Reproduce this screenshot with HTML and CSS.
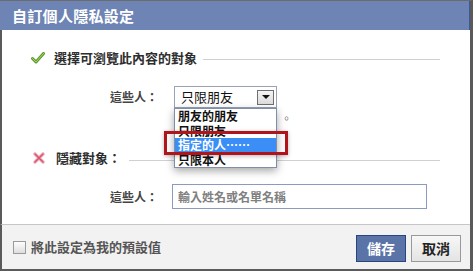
FILE: index.html
```html
<!DOCTYPE html>
<html lang="zh-Hant">
<head>
<meta charset="utf-8">
<link rel="stylesheet" href="styles.css">
</head>
<body>
<div class="dialog">
  <div class="title">自訂個人隱私設定</div>
  <div class="body">
    <div class="section-head">
      <svg class="icon" width="14" height="12" viewBox="0 0 14 12">
        <path d="M1.5 6.5 L5 10 L12.5 1.5" fill="none" stroke="#5f9a2c" stroke-width="3" stroke-linecap="round" stroke-linejoin="round"/>
        <path d="M1.5 6.5 L5 10 L12.5 1.5" fill="none" stroke="#a6d66a" stroke-width="1" stroke-linecap="round" stroke-linejoin="round"/>
      </svg>
      <span class="head-text">選擇可瀏覽此內容的對象</span>
      <span class="rule"></span>
    </div>
    <div class="field-row first">
      <span class="label">這些人：</span>
      <div class="select-wrap">
        <div class="select">
          <span class="select-value">只限朋友</span>
          <span class="select-btn"><span class="tri"></span></span>
        </div>
        <ul class="options">
          <li>朋友的朋友</li>
          <li>只限朋友</li>
          <li class="active">指定的人……</li>
          <li>只限本人</li>
        </ul>
        <div class="mark"></div>
      </div>
      <span class="hint">。</span>
    </div>
    <div class="section-head second">
      <svg class="icon x" width="12" height="12" viewBox="0 0 12 12">
        <path d="M2 2 L10 10 M10 2 L2 10" fill="none" stroke="#f2b9c3" stroke-width="3.6" stroke-linecap="round"/>
        <path d="M2 2 L10 10 M10 2 L2 10" fill="none" stroke="#d4566c" stroke-width="1.6" stroke-linecap="round"/>
      </svg>
      <span class="head-text">隱藏對象：</span>
      <span class="rule"></span>
    </div>
    <div class="field-row last">
      <span class="label">這些人：</span>
      <input class="text-input" type="text" placeholder="輸入姓名或名單名稱">
    </div>
  </div>
  <div class="footer">
    <label class="default">
      <span class="checkbox"></span>
      <span class="default-text">將此設定為我的預設值</span>
    </label>
    <div class="buttons">
      <button class="btn primary">儲存</button>
      <button class="btn">取消</button>
    </div>
  </div>
</div>
</body>
</html>
```

FILE: styles.css
```css
* { box-sizing: border-box; }
html, body { margin: 0; padding: 0; background: #fff; }
body {
  font-family: "Noto Sans CJK TC", "Liberation Sans", sans-serif;
  width: 473px;
  height: 271px;
  overflow: hidden;
}
.dialog {
  width: 473px;
  height: 271px;
  border-top: 1px solid #6b6b6b;
  border-right: 3px solid #5a5a5a;
  border-bottom: 2px solid #5a5a5a;
  display: flex;
  flex-direction: column;
}
.title {
  height: 29px;
  background: #6d84b4;
  border-right: 1px solid #3b5998;
  color: #fff;
  font-size: 15px;
  font-weight: bold;
  line-height: 29px;
  padding-left: 12px;
  letter-spacing: 0.3px;
}
.body {
  flex: 1;
  background: #fff;
  border-left: 2px solid #5a5a5a;
  padding: 20px 30px 0 29px;
}
.section-head {
  display: flex;
  align-items: center;
  height: 16px;
}
.section-head.second { margin-top: 42px; }
.icon { flex: none; }
.icon.x { margin-left: 2px; margin-right: 2px; }
.head-text {
  margin-left: 9px;
  font-size: 13px;
  font-weight: bold;
  color: #2e2e2e;
  line-height: 16px;
  white-space: nowrap;
}
.rule {
  flex: 1;
  height: 1px;
  background: #d0d0d0;
  margin-left: 6px;
  margin-top: 3px;
}
.section-head.second .rule { margin-left: 8px; margin-top: 4px; }
.field-row {
  display: flex;
  align-items: center;
  padding-left: 79px;
}
.field-row.first { margin-top: 20px; height: 22px; }
.field-row.last { margin-top: 18px; height: 25px; }
.label {
  width: 62px;
  font-size: 12px;
  font-weight: bold;
  color: #444;
  line-height: 16px;
}
.select-wrap {
  position: relative;
  margin-left: 2px;
  width: 103px;
  height: 22px;
}
.select {
  height: 22px;
  border: 1px solid #98a2b5;
  background: #fff;
  display: flex;
  align-items: center;
  padding-left: 6px;
}
.select-value {
  flex: 1;
  font-size: 13px;
  color: #111;
  line-height: 16px;
}
.select-btn {
  width: 17px;
  height: 15px;
  margin-right: 2px;
  border: 1px solid #6f6f6f;
  background: linear-gradient(#f4f4f4, #dcdcdc);
  display: flex;
  align-items: center;
  justify-content: center;
}
.tri {
  width: 0;
  height: 0;
  border-left: 4px solid transparent;
  border-right: 4px solid transparent;
  border-top: 4px solid #111;
}
.options {
  position: absolute;
  left: 0;
  top: 22px;
  width: 103px;
  margin: 0;
  padding: 0;
  list-style: none;
  background: #fff;
  border: 1px solid #7f8fa9;
  box-shadow: 0 3px 8px rgba(0,0,0,0.35);
  z-index: 2;
}
.options li {
  height: 14.5px;
  line-height: 14.5px;
  font-size: 12px;
  font-weight: bold;
  color: #111;
  padding-left: 3px;
  white-space: nowrap;
}
.options li.active {
  background: #3a8ef6;
  color: #fff;
}
.mark {
  position: absolute;
  left: -10px;
  top: 45px;
  width: 124px;
  height: 24px;
  border: 3px solid #b0151d;
  box-shadow: 0 1px 4px rgba(0,0,0,0.3);
  z-index: 3;
}
.hint {
  align-self: flex-start;
  margin-left: 4px;
  margin-top: 26px;
  font-size: 11px;
  line-height: 12px;
  color: #777;
}
.text-input {
  width: 255px;
  height: 25px;
  border: 1px solid #8a9bbd;
  padding: 0 0 0 5px;
  font-family: inherit;
  font-size: 12px;
  font-weight: bold;
  color: #333;
  outline: none;
}
.text-input::placeholder { color: #808080; }
.footer {
  height: 45px;
  background: #f2f2f2;
  border-top: 1px solid #c6c6c6;
  border-left: 2px solid #5a5a5a;
  display: flex;
  align-items: center;
  justify-content: space-between;
  padding: 0 9px 0 11px;
}
.default {
  display: flex;
  align-items: center;
}
.checkbox {
  width: 13px;
  height: 13px;
  border: 1px solid #9a9a9a;
  background: linear-gradient(#fdfdfd, #dedede);
}
.default-text {
  margin-left: 5px;
  font-size: 13px;
  font-weight: bold;
  color: #555;
  line-height: 16px;
}
.buttons {
  display: flex;
  gap: 5px;
  margin-top: 2px;
}
.btn {
  width: 50px;
  height: 27px;
  padding: 0;
  font-family: inherit;
  font-size: 14px;
  font-weight: bold;
  color: #222;
  background: linear-gradient(#f7f7f7, #e4e4e4);
  border: 1px solid #999;
  line-height: 16px;
}
.btn.primary {
  background: #5b74a8;
  border: 1px solid #29447e;
  color: #fff;
}
```
